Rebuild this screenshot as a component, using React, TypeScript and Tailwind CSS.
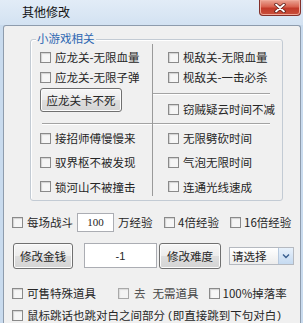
import React from "react";

const box =
  "w-[11px] h-[11px] shrink-0 border border-[#8a8a8a] bg-[#f6f6f6] shadow-[inset_1px_1px_1px_#d2d2d2]";
const btn =
  "flex items-center justify-center border border-[#707070] rounded-[3px] bg-[linear-gradient(#f6f6f6,#ececec_50%,#dedede_50%,#d4d4d4)] shadow-[inset_0_0_0_1px_#fcfcfc]";
const line = "h-px bg-[#a3a3a3] shadow-[0_1px_0_#ffffff]";
const paren = "font-['Liberation_Sans',sans-serif]";

function Check({ label, h = "h-[20px]", gap = "gap-[4px]" }: { label: string; h?: string; gap?: string }) {
  return (
    <div className={`flex items-center ${gap} ${h}`}>
      <span className={box} />
      <span className="whitespace-nowrap">{label}</span>
    </div>
  );
}

function App() {
  return (
    <div className="w-[303px] h-[323px] overflow-hidden flex flex-col bg-[#c9dbee] text-[11.5px] leading-[14px] text-[#262626] font-['Noto_Sans_CJK_SC',sans-serif]">
      {/* title bar */}
      <div className="h-[25px] shrink-0 flex items-start bg-[linear-gradient(#e2ecf7,#d3e2f2)]">
        <span className="ml-[22px] mt-[5px] text-[12px] text-[#111]">其他修改</span>
        <div className="ml-auto mr-[2px] w-[42px] h-[16px] flex items-center justify-center rounded-b-[4px] border border-t-0 border-[#83302a] bg-[linear-gradient(#eba695,#d8624f_45%,#c23a29_55%,#c9503c)] shadow-[inset_0_0_0_1px_#f0a898]">
          <svg width="12" height="10" viewBox="0 0 12 10">
            <path d="M2 1.5 L10 8.5 M10 1.5 L2 8.5" stroke="#5a1a14" strokeWidth="3.4" strokeLinecap="round" />
            <path d="M2 1.5 L10 8.5 M10 1.5 L2 8.5" stroke="#ffffff" strokeWidth="1.8" strokeLinecap="round" />
          </svg>
        </div>
      </div>

      {/* client area */}
      <div className="ml-[3px] mr-[2px] flex-1 bg-[#f0f0f0] border-t border-l border-r border-[#8e9cad] rounded-t-[3px]">
        {/* group box */}
        <div className="relative ml-[26px] mt-[13px] w-[253px] h-[162px] border border-[#c3cbd4] rounded-[3px] shadow-[inset_1px_1px_0_#ffffff]">
          <span className="absolute left-[5px] top-[-9px] px-[1px] bg-[#f0f0f0] text-[#2d67b2] whitespace-nowrap">
            小游戏相关
          </span>
          <div className="flex h-full">
            <div className="w-[121px] flex flex-col">
              <div className="h-[83px] pl-[9px] pt-[7px] flex flex-col">
                <Check label="应龙关-无限血量" />
                <Check label="应龙关-无限子弹" />
                <div className={`${btn} mt-[1px] w-[82px] h-[24px]`}>应龙关卡不死</div>
              </div>
              <div className={`${line} ml-[11px]`} />
              <div className="pl-[9px] pt-[2px] flex flex-col">
                <Check label="接招师傅慢慢来" h="h-[24px]" />
                <Check label="驭界枢不被发现" h="h-[24px]" />
                <Check label="锁河山不被撞击" h="h-[25px]" />
              </div>
            </div>
            <div className="w-px my-[4px] bg-[#9a9a9a]" />
            <div className="flex-1 flex flex-col">
              <div className="h-[83px] pt-[7px] flex flex-col">
                <div className="pl-[15px]">
                  <Check label="枧敌关-无限血量" />
                  <Check label="枧敌关-一击必杀" />
                </div>
                <div className={`${line} mt-[6px] mr-[12px]`} />
                <div className="pl-[15px] mt-[5px]">
                  <Check label="窃贼疑云时间不减" />
                </div>
              </div>
              <div className={`${line} mr-[12px]`} />
              <div className="pl-[15px] pt-[2px] flex flex-col">
                <Check label="无限劈砍时间" h="h-[24px]" />
                <Check label="气泡无限时间" h="h-[24px]" />
                <Check label="连通光线速成" h="h-[25px]" />
              </div>
            </div>
          </div>
        </div>

        {/* row: experience */}
        <div className="mt-[11px] pl-[8px] h-[20px] flex items-center">
          <span className={box} />
          <span className="ml-[4px] w-[46px] whitespace-nowrap">每场战斗</span>
          <div className="ml-[4px] w-[37px] h-[19px] flex items-center justify-center bg-white border border-[#abadb3] text-[11px] font-['Liberation_Serif',serif]">
            100
          </div>
          <span className="ml-[4px] w-[42px] whitespace-nowrap">万经验</span>
          <span className={`${box} ml-[4px]`} />
          <span className="ml-[3px] w-[48px] whitespace-nowrap">4倍经验</span>
          <span className={`${box} ml-[4px]`} />
          <span className="ml-[3px] whitespace-nowrap">16倍经验</span>
        </div>

        {/* row: money / difficulty */}
        <div className="mt-[11px] pl-[9px] h-[26px] flex items-start">
          <div className={`${btn} w-[60px] h-[26px]`}>修改金钱</div>
          <div className="ml-[11px] w-[73px] h-[25px] flex items-center justify-center bg-white border border-[#abadb3] font-['Liberation_Sans',sans-serif] text-[11px]">
            -1
          </div>
          <div className={`${btn} ml-[2px] w-[62px] h-[26px]`}>修改难度</div>
          <div className="ml-[8px] mt-[4px] w-[65px] h-[18px] flex items-stretch bg-[linear-gradient(#ffffff,#ececec)] border border-[#b5b9c0]">
            <span className="pl-[2px] flex-1 flex items-center whitespace-nowrap">请选择</span>
            <span className="w-[15px] flex items-center justify-center border-l border-[#b7c9de] bg-[linear-gradient(#e8f1fb,#c5daf1)]">
              <svg width="8" height="6" viewBox="0 0 8 6">
                <path d="M1 1.5 L4 4.5 L7 1.5" fill="none" stroke="#3a5f8f" strokeWidth="1.4" />
              </svg>
            </span>
          </div>
        </div>

        {/* row: items */}
        <div className="mt-[14px] pl-[8px] h-[20px] flex items-center">
          <span className={box} />
          <span className="ml-[4px] w-[91px] whitespace-nowrap">可售特殊道具</span>
          <span className={`${box} opacity-70`} />
          <span className="ml-[5px] whitespace-nowrap text-[#555]">去</span>
          <span className="ml-[7px] w-[56px] whitespace-nowrap text-[#444]">无需道具</span>
          <span className={box} />
          <span className="ml-[3px] whitespace-nowrap">100%掉落率</span>
        </div>

        {/* row: dialog skip */}
        <div className="mt-[2px] pl-[8px] h-[20px] flex items-center">
          <span className={box} />
          <span className="ml-[4px] flex items-center whitespace-nowrap">
            鼠标跳话也跳对白之间部分<span className={`${paren} ml-[3px] mr-[1px]`}>(</span>即直接跳到下句对白<span className={`${paren} ml-[1px]`}>)</span>
          </span>
        </div>
      </div>
    </div>
  );
}

export default App;
